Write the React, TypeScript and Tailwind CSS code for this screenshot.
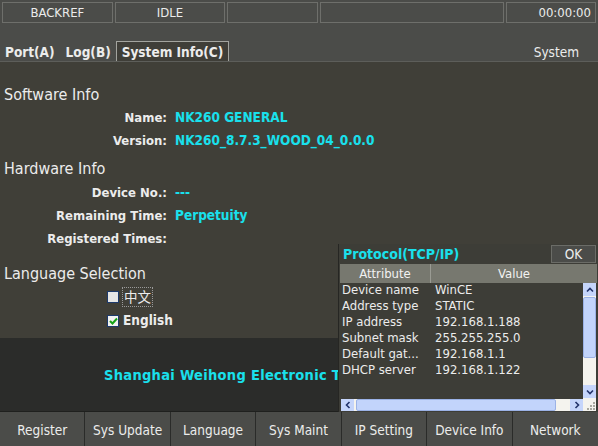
import React from 'react'

const font = { fontFamily: '"DejaVu Sans Condensed", "DejaVu Sans", "Noto Sans CJK SC", sans-serif' }

const infoRow = (label: string, value: string) => (
  <div className="flex h-[23px] items-center">
    <span className="w-[163px] text-right text-[13px] font-bold text-[#ececec]">{label}</span>
    <span className="ml-[8px] text-[13.5px] font-bold text-[#19e0ec]">{value}</span>
  </div>
)

const attrs = [
  ['Device name', 'WinCE'],
  ['Address type', 'STATIC'],
  ['IP address', '192.168.1.188'],
  ['Subnet mask', '255.255.255.0'],
  ['Default gat...', '192.168.1.1'],
  ['DHCP server', '192.168.1.122'],
]

const buttons = ['Register', 'Sys Update', 'Language', 'Sys Maint', 'IP Setting', 'Device Info', 'Network']

export default function App() {
  return (
    <div style={font} className="relative flex h-[446px] w-[598px] flex-col overflow-hidden bg-[#4b4c49] text-[#ececec]">
      {/* status bar */}
      <div className="flex h-[23px] gap-[2px] px-[2px] pt-[2px]">
        <div className="flex w-[111px] items-center justify-center border border-[#6e6f6b] text-[13px]">BACKREF</div>
        <div className="flex w-[111px] items-center justify-center border border-[#6e6f6b] text-[13px]">IDLE</div>
        <div className="w-[91px] border border-[#6e6f6b]" />
        <div className="w-[185px] border border-[#6e6f6b]" />
        <div className="flex w-[90px] items-center justify-end border border-[#6e6f6b] pr-[4px] text-[13px]">00:00:00</div>
      </div>

      {/* tabs */}
      <div className="flex h-[39px] items-end border-b border-[#5d5e5a] pl-[5px]">
        <span className="text-[13.5px] font-bold leading-[18px]">Port(A)</span>
        <span className="ml-[11px] text-[13.5px] font-bold leading-[18px]">Log(B)</span>
        <span className="ml-[5px] flex h-[20px] items-center border border-b-0 border-[#a3a49f] bg-[#3f3e38] px-[5px] pt-[1px] text-[13.5px] font-bold">System Info(C)</span>
        <span className="ml-auto mr-[19px] text-[13.5px] leading-[18px]">System</span>
      </div>

      {/* content */}
      <div className="flex flex-1 flex-col bg-[#403f38] pl-[4px]">
        <div className="mb-[1px] mt-[23px] flex h-[20px] items-center text-[16px]">Software Info</div>
        {infoRow('Name:', 'NK260 GENERAL')}
        {infoRow('Version:', 'NK260_8.7.3_WOOD_04_0.0.0')}
        <div className="mb-[2px] mt-[7px] flex h-[20px] items-center text-[16px]">Hardware Info</div>
        {infoRow('Device No.:', '---')}
        {infoRow('Remaining Time:', 'Perpetuity')}
        {infoRow('Registered Times:', '')}
        <div className="mb-[1px] mt-[14px] flex h-[20px] items-center text-[16px]">Language Selection</div>
        <div className="flex h-[23px] items-center pl-[103px]">
          <span className="h-[12px] w-[12px] border border-[#1d3a6c] bg-[#e6e6e6]" />
          <span className="ml-[3px] border border-dotted border-[#9a9a9a] px-[1px] text-[13.5px] leading-[18px]">中文</span>
        </div>
        <div className="mt-[1px] flex h-[23px] items-center pl-[103px]">
          <span className="flex h-[12px] w-[12px] items-center justify-center border border-[#1d3a6c] bg-[#f2f2f2]">
            <svg width="9" height="8" viewBox="0 0 9 8">
              <path d="M1 4 L3.5 6.5 L8 1.5" stroke="#16a316" strokeWidth="2" fill="none" />
            </svg>
          </span>
          <span className="ml-[4px] text-[13.5px] font-bold">English</span>
        </div>
      </div>

      {/* company band, text runs on under the dialog */}
      <div className="flex h-[73px] items-center bg-[#2b2c2a] pl-[104px] pt-[3px]">
        <span className="block w-[234px] overflow-hidden whitespace-nowrap text-[14.5px] font-bold tracking-[0.3px] text-[#19e0ec]">
          Shanghai Weihong Electronic Technology Co., Ltd.
        </span>
      </div>

      {/* bottom buttons */}
      <div className="grid h-[35px] grid-cols-7 border-t border-[#1f201e] bg-[#4b4c49]">
        {buttons.map((b) => (
          <div key={b} className="flex items-center justify-center border-r border-[#2a2b29] pt-[2px] text-[13.5px] last:border-r-0">
            {b}
          </div>
        ))}
      </div>

      {/* protocol dialog */}
      <div className="absolute left-[338px] top-[244px] flex h-[168px] w-[260px] flex-col border-l border-[#262623] bg-[#3d3d37]">
        <div className="flex h-[20px] items-center pl-[4px] pr-[2px]">
          <span className="text-[14px] font-bold text-[#19e0ec]">Protocol(TCP/IP)</span>
          <span className="ml-auto flex h-[18px] w-[45px] items-center justify-center border border-[#6b6c67] bg-[#4b4c49] text-[13.5px]">OK</span>
        </div>
        <div className="mx-[1px] flex h-[19px] bg-[#77786f] text-[13px] text-[#f2f2f2]">
          <span className="flex w-[91px] items-center justify-center border-r border-[#9a9b93]">Attribute</span>
          <span className="flex flex-1 items-center justify-center">Value</span>
        </div>
        <div className="flex flex-1">
          <div className="flex flex-1 flex-col">
            <div className="-mt-[1px] flex-1 pl-[3px]">
              {attrs.map(([a, v]) => (
                <div key={a} className="flex h-[16px] items-center text-[13px] text-[#ececec]">
                  <span className="w-[93px] whitespace-nowrap">{a}</span>
                  <span>{v}</span>
                </div>
              ))}
            </div>
            {/* horizontal scrollbar */}
            <div className="mb-[1px] ml-[2px] flex h-[12px] bg-[#f4f3ee]">
              <span className="flex w-[13px] items-center justify-center bg-[#c5d5fb]">
                <svg width="6" height="8" viewBox="0 0 6 8"><path d="M4.5 1 L1.5 4 L4.5 7" stroke="#22336b" strokeWidth="1.6" fill="none" /></svg>
              </span>
              <span className="ml-[2px] w-[200px] rounded-[2px] border border-[#9bb2e6] bg-[#c2d4fb]" />
              <span className="flex-1" />
              <span className="flex w-[13px] items-center justify-center bg-[#c5d5fb]">
                <svg width="6" height="8" viewBox="0 0 6 8"><path d="M1.5 1 L4.5 4 L1.5 7" stroke="#22336b" strokeWidth="1.6" fill="none" /></svg>
              </span>
            </div>
          </div>
          {/* vertical scrollbar */}
          <div className="mr-[2px] flex w-[13px] flex-col">
            <div className="flex h-[115px] flex-col bg-[#f4f3ee]">
              <span className="flex h-[13px] items-center justify-center bg-[#c5d5fb]">
                <svg width="8" height="6" viewBox="0 0 8 6"><path d="M1 4.5 L4 1.5 L7 4.5" stroke="#22336b" strokeWidth="1.6" fill="none" /></svg>
              </span>
              <span className="mt-[1px] h-[61px] rounded-[2px] border border-[#9bb2e6] bg-[#c2d4fb]" />
              <span className="flex-1" />
              <span className="flex h-[13px] items-center justify-center bg-[#c5d5fb]">
                <svg width="8" height="6" viewBox="0 0 8 6"><path d="M1 1.5 L4 4.5 L7 1.5" stroke="#22336b" strokeWidth="1.6" fill="none" /></svg>
              </span>
            </div>
            <div className="mb-[1px] flex flex-1 items-end justify-end bg-[#f4f3ee] p-[1px]">
              <svg width="9" height="9" viewBox="0 0 9 9" fill="#a8a8a0">
                <rect x="7" y="1" width="2" height="2" />
                <rect x="4" y="4" width="2" height="2" />
                <rect x="7" y="4" width="2" height="2" />
                <rect x="1" y="7" width="2" height="2" />
                <rect x="4" y="7" width="2" height="2" />
                <rect x="7" y="7" width="2" height="2" />
              </svg>
            </div>
          </div>
        </div>
      </div>
    </div>
  )
}
